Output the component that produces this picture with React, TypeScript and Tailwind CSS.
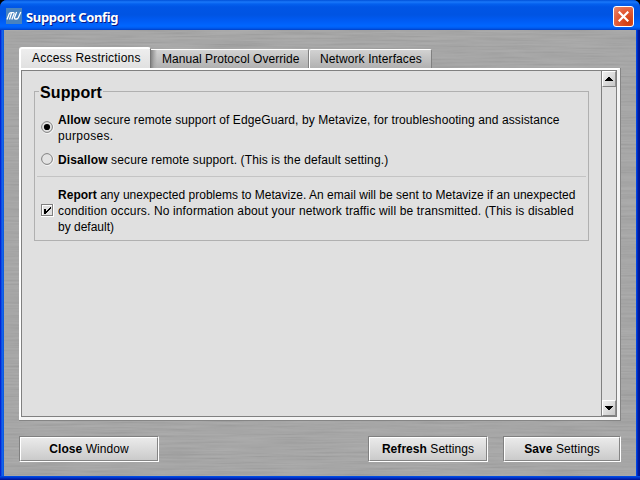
import React from "react";

function Metal() {
  return (
    <svg className="absolute inset-0 h-full w-full" aria-hidden="true">
      <filter id="brushed" x="0" y="0" width="100%" height="100%">
        <feTurbulence type="fractalNoise" baseFrequency="0.015 0.5" numOctaves="3" seed="4" />
        <feColorMatrix values="0.13 0 0 0 0.555  0.13 0 0 0 0.555  0.13 0 0 0 0.555  0 0 0 0 1" colorInterpolationFilters="sRGB" />
      </filter>
      <rect width="100%" height="100%" filter="url(#brushed)" />
    </svg>
  );
}

function PushButton({ strong, rest, className, spacing }: { strong: string; rest: string; className: string; spacing: string }) {
  return (
    <button
      className={`h-[26px] border border-t-[#808080] border-l-[#808080] border-r-white border-b-white bg-gradient-to-b from-[#ececec] to-[#c9c9c9] p-0 ${className}`}
    >
      <span className="flex h-full items-center justify-center border border-t-white border-l-white border-r-[#858585] border-b-[#858585]">
        <span className={`whitespace-pre text-[12px] leading-[14px] ${spacing}`}>
          <b>{strong}</b> {rest}
        </span>
      </span>
    </button>
  );
}

function Arrow({ up }: { up?: boolean }) {
  return (
    <div className="flex h-[16px] w-full shrink-0 items-center justify-center border border-t-white border-l-white border-r-[#909090] border-b-[#808080] bg-gradient-to-br from-[#f0f0f0] to-[#c8c8c8]">
      <svg width="8" height="4" viewBox="0 0 8 4" shapeRendering="crispEdges">
        <path d={up ? "M3 0h2v1h1v1h1v1h1v1H0V3h1V2h1V1h1z" : "M0 0h8v1H7v1H6v1H5v1H3V3H2V2H1V1H0z"} />
      </svg>
    </div>
  );
}

function Radio({ checked }: { checked?: boolean }) {
  return (
    <svg width="13" height="13" viewBox="0 0 13 13" className="mb-[2px] shrink-0">
      <circle cx="6.5" cy="6.5" r="6" fill="#e3e3e3" stroke="#f8f8f8" />
      <circle cx="6" cy="6" r="5.4" fill="#e3e3e3" stroke="#7d7d7d" />
      {checked && <circle cx="6" cy="6" r="3.1" fill="#000" />}
    </svg>
  );
}

function Line({ children, className }: { children: React.ReactNode; className: string }) {
  return <div className={`w-max whitespace-pre ${className}`}>{children}</div>;
}

export default function App() {
  return (
    <div className="h-[480px] w-[640px] overflow-hidden bg-black font-['Liberation_Sans',Arial,sans-serif] text-[12px] text-black">
      <div className="flex h-full flex-col overflow-hidden rounded-t-[7px] bg-[#0a46e0]">
        <header className="flex h-[30px] shrink-0 items-center bg-[linear-gradient(to_bottom,#0050d8_0,#1a78fa_2px,#0460ee_4px,#0055e5_7px,#0054e3_15px,#005cf5_21px,#0066ff_26px,#005bf0_28px,#0040c8_30px)] pl-[6px] pr-[6px] pt-[2px]">
          <div className="h-[16px] w-[16px] bg-[#4782bf]">
            <svg width="16" height="16" viewBox="0 0 16 16" fill="none" stroke="#fff" strokeWidth="1.3">
              <path d="M1 11.5 3.2 5.8Q3.7 4.6 5 4.6H7.2Q8.5 4.6 8 6L5.8 11.5M5.6 4.8 3.5 11.5M10.6 4 8.6 9.3Q8 11 9.6 11H10.4Q11.8 11 12.4 9.5L14.8 4" />
            </svg>
          </div>
          <h1 className="ml-[4px] flex-1 whitespace-pre pt-[1px] font-['Noto_Sans',sans-serif] text-[13px] font-bold leading-[18px] tracking-[-0.35px] text-white [text-shadow:1px_1px_0_#0a1883]">Support Config</h1>
          <button className="flex h-[21px] w-[21px] items-center justify-center rounded-[3px] border border-white bg-[radial-gradient(circle_at_75%_80%,#d03c0c_0,#e35b37_55%,#e98b71_100%)]">
            <svg width="11" height="11" viewBox="0 0 11 11" stroke="#fff" strokeWidth="2.2">
              <path d="M.7.7l9.6 9.6M10.3.7L.7 10.3" />
            </svg>
          </button>
        </header>
        <div className="flex-1 bg-[linear-gradient(to_right,#0019cf_0,#0831d9_1px,#166aee_2px,#0855dd_4px,#0855dd_630px,#0053ee_636px,#0038dc_637px,#001da0_638px,#00138c_640px)] px-[4px]">
          <main className="relative isolate h-[446px] w-[632px]">
            <Metal />
            <div className="relative flex h-full flex-col pl-[15px] pt-[17px]">
              <nav className="flex h-[21px] items-end">
                <div className="h-[22px] w-[132px] shrink-0 self-start rounded-t-[3px] border-l-2 border-t-2 border-r border-white border-r-[#777] bg-gradient-to-b from-[#eeeeee] to-[#e0e0e0] pl-[11px] pt-[1px]">
                  <Line className="leading-[16px] tracking-[0.21px]">Access Restrictions</Line>
                </div>
                <div className="h-[19px] w-[158px] shrink-0 rounded-tr-[2px] border-t border-t-white border-r border-r-[#808080] bg-[linear-gradient(to_right,#858585_0,#aaa_3px,transparent_6px),linear-gradient(to_bottom,#d2d2d2,#b1b1b1)] pl-[11px] pt-[1px]">
                  <Line className="leading-[16px] tracking-[0.06px]">Manual Protocol Override</Line>
                </div>
                <div className="h-[19px] w-[123px] shrink-0 rounded-t-[2px] border-l border-t border-white border-r border-r-[#808080] bg-gradient-to-b from-[#d2d2d2] to-[#b1b1b1] pl-[10px] pt-[1px]">
                  <Line className="leading-[16px] tracking-[0.1px]">Network Interfaces</Line>
                </div>
              </nav>
              <div className="h-[353px] w-[602px] border-b border-r border-[#858585]">
                <div className="h-full border-2 border-white border-b-[3px] border-r-[3px] border-b-[#f4f4f4] border-r-[#f4f4f4]">
                  <div className="flex h-full border border-[#808080] bg-[#e0e0e0]">
                    <section className="flex-1 pl-[12px] pt-[11px]">
                      <div className="flex h-[159px] w-[555px] flex-col">
                        <div className="flex h-[20px] shrink-0 items-center">
                          <i className="h-[11px] w-[5px] self-end border-l border-t border-[#b0b0b0]" />
                          <h2 className="w-[64px] whitespace-pre pl-[1px] pt-[2px] text-[16px] font-bold leading-[20px] tracking-[0.1px]">Support</h2>
                          <i className="h-[11px] flex-1 self-end border-r border-t border-[#b0b0b0]" />
                        </div>
                        <div className="flex-1 border-x border-b border-[#b0b0b0] px-[2px] pt-[10px]">
                          <label className="flex items-center pl-[4px]">
                            <Radio checked />
                            <span className="ml-[4px] leading-[16px]">
                              <Line className="tracking-[0.09px]"><b>Allow</b> secure remote support of EdgeGuard, by Metavize, for troubleshooting and assistance</Line>
                              <Line className="tracking-[0.31px]">purposes.</Line>
                            </span>
                          </label>
                          <label className="mt-[8px] flex items-center pl-[4px]">
                            <Radio />
                            <span className="ml-[4px] leading-[16px]">
                              <Line className="tracking-[0.12px]"><b>Disallow</b> secure remote support. (This is the default setting.)</Line>
                            </span>
                          </label>
                          <hr className="mt-[8px] border-t border-[#c4c4c4]" />
                          <label className="mt-[10px] flex items-center pl-[4px]">
                            <svg width="13" height="13" viewBox="0 0 13 13" className="mb-[2px] shrink-0" shapeRendering="crispEdges">
                              <path fill="#fff" d="M0 0h13v13H0z" />
                              <path fill="#808080" d="M0 0h12v12H0z" />
                              <path fill="#fff" d="M1 1h10v10H1z" />
                              <path fill="#e0e0e0" d="M2 2h9v9H2z" />
                              <path fill="#000" d="M3 5h2v2h1V6h1V5h1V4h1V3h1v2H9v1H8v1H7v1H6v1H5v1H3z" />
                            </svg>
                            <span className="ml-[4px] leading-[16px]">
                              <Line className="tracking-[0.02px]"><b>Report</b> any unexpected problems to Metavize. An email will be sent to Metavize if an unexpected</Line>
                              <Line className="tracking-[0.14px]">condition occurs. No information about your network traffic will be transmitted. (This is disabled</Line>
                              <Line className="tracking-[0px]">by default)</Line>
                            </span>
                          </label>
                        </div>
                      </div>
                    </section>
                    <aside className="flex w-[15px] shrink-0 flex-col justify-between border-l border-[#808080]">
                      <Arrow up />
                      <Arrow />
                    </aside>
                  </div>
                </div>
              </div>
              <footer className="mt-[15px] flex w-[602px]">
                <PushButton className="w-[140px]" spacing="tracking-[0.05px]" strong="Close" rest="Window" />
                <PushButton className="ml-auto w-[120px]" spacing="tracking-[0.05px]" strong="Refresh" rest="Settings" />
                <PushButton className="ml-[15px] w-[118px]" spacing="tracking-[0.05px]" strong="Save" rest="Settings" />
              </footer>
            </div>
          </main>
        </div>
        <div className="h-[4px] shrink-0 bg-[linear-gradient(to_bottom,#0055e5_0,#0040dc_1px,#001fab_3px,#00138c_4px)]" />
      </div>
    </div>
  );
}
